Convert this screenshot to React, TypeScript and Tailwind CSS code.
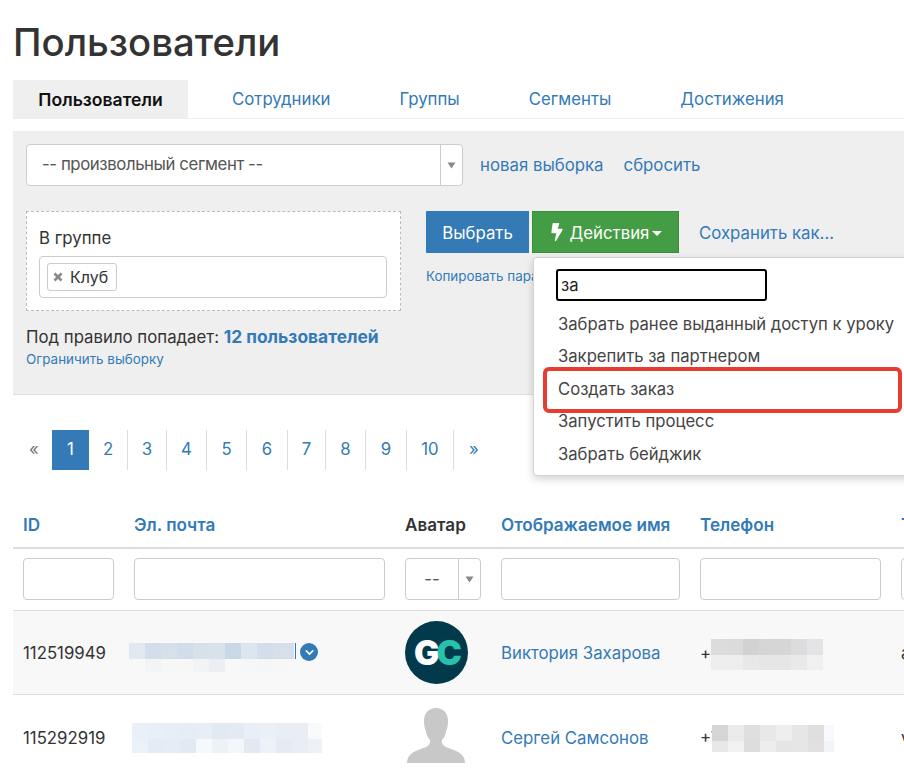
import React from 'react'
import { FaBolt } from 'react-icons/fa'
import { ChevronDown } from 'lucide-react'

const tabs = ['Сотрудники', 'Группы', 'Сегменты', 'Достижения']
const pages = [
  { label: '2', w: 'w-[39px]' },
  { label: '3', w: 'w-[39px]' },
  { label: '4', w: 'w-[40px]' },
  { label: '5', w: 'w-[40px]' },
  { label: '6', w: 'w-[41px]' },
  { label: '7', w: 'w-[38px]' },
  { label: '8', w: 'w-[40px]' },
  { label: '9', w: 'w-[41px]' },
  { label: '10', w: 'w-[47px]' },
]
const menuItems = ['Забрать ранее выданный доступ к уроку', 'Закрепить за партнером', 'Создать заказ', 'Запустить процесс', 'Забрать бейджик']

const email1 = [
  ['bg-[#e2e8ef]', 'bg-[#d3deea]', 'bg-[#d6e0ea]', 'bg-[#d1dde8]', 'bg-[#d6e1ea]', 'bg-[#d8e2eb]', 'bg-[#c9d8e6]', 'bg-[#dde6ee]', 'bg-[#d3deea]', 'bg-[#d6e0ea]', 'bg-[#d3deea]'],
  ['bg-[#f8f8f8]', 'bg-[#f3f4f5]', 'bg-[#f6f7f7]', 'bg-[#f7f7f7]', 'bg-[#f2f3f4]', 'bg-[#ebeff3]', 'bg-[#f8f8f8]', 'bg-[#f6f7f8]', 'bg-[#f5f6f7]', 'bg-[#f7f7f7]', 'bg-[#f8f8f8]'],
]
const email2 = [
  ['bg-[#eaf0f7]', 'bg-[#e9eff7]', 'bg-[#e8eef5]', 'bg-[#e6edf5]', 'bg-[#e8eef5]', 'bg-[#e1e9f2]', 'bg-[#e3eaf3]', 'bg-[#e9eff6]', 'bg-[#eceff4]', 'bg-[#e9eef5]', 'bg-[#e9eef5]', 'bg-[#f8fafc]'],
  ['bg-[#ebf1f8]', 'bg-[#e4ebf4]', 'bg-[#e5ecf5]', 'bg-[#e1e9f3]', 'bg-[#f6f9fb]', 'bg-[#edf2f7]', 'bg-[#f4f7fa]', 'bg-[#e2e9f3]', 'bg-[#edf2f8]', 'bg-[#e5ebf3]', 'bg-[#e9eef5]', 'bg-[#edf2f7]'],
]
const phone1 = [
  ['bg-[#dcdcdc]', 'bg-[#dbdbdb]', 'bg-[#d2d2d2]', 'bg-[#d5d5d5]', 'bg-[#d6d6d6]', 'bg-[#dcdcdc]', 'bg-[#e3e4e5]'],
  ['bg-[#eeeeee]', 'bg-[#eeeeee]', 'bg-[#e8e8e8]', 'bg-[#e6e6e6]', 'bg-[#e6e6e6]', 'bg-[#e9e9e9]', 'bg-[#f0f0f0]'],
]
const phone2 = [
  ['bg-[#d5d5d5]', 'bg-[#ebebeb]', 'bg-[#dedede]', 'bg-[#e8e8e8]', 'bg-[#eeeeee]', 'bg-[#e6e6e6]', 'bg-[#dfdfdf]', 'bg-[#f8f9fc]'],
  ['bg-[#e8e8e8]', 'bg-[#f2f2f2]', 'bg-[#dddddd]', 'bg-[#ededed]', 'bg-[#e5e5e5]', 'bg-[#e6e6e6]', 'bg-[#e2e1e0]', 'bg-[#f3f4f9]'],
]

const Mosaic = ({ rows, heights, className }: { rows: string[][]; heights: string[]; className: string }) => (
  <div className={`flex flex-col shrink-0 overflow-hidden ${className}`}>
    {rows.map((row, i) => (
      <div key={i} className={`flex ${heights[i]}`}>
        {row.map((c, j) => (
          <div key={j} className={`w-[16px] shrink-0 h-full ${c}`} />
        ))}
      </div>
    ))}
  </div>
)

const SelectArrow = () => (
  <svg width="9" height="7" viewBox="0 0 9 7" className="text-[#888]">
    <path d="M0.5 0.5h8L4.5 6.5z" fill="currentColor" />
  </svg>
)

export default function App() {
  return (
    <div className="h-[774px] overflow-hidden bg-white pl-[13px] font-['Inter','Noto_Sans',sans-serif] text-[16.8px] text-[#333] relative">
      <h1 className="h-[80px] pt-[20px] text-[38.3px] leading-[45px] font-medium text-[#333]">Пользователи</h1>

      <div className="flex h-[39px] border-b border-[#eeeeee] w-[900px]">
        <div className="h-[38px] w-[175px] pt-[2px] bg-[#efefef] flex items-center justify-center font-semibold text-[17.6px] text-[#111]">Пользователи</div>
        <div className="flex gap-[19px] ml-[19px]">
          {tabs.map(t => (
            <a key={t} className="px-[25px] h-[38px] pt-[2px] flex items-center text-[#337ab7]">{t}</a>
          ))}
        </div>
      </div>

      <div className="mt-[12px] h-[264px] bg-[#efefef] border-b border-[#dddddd] pt-[13px] pl-[13px]">
        <div className="flex items-center">
          <div className="flex h-[42px] w-[437px] bg-white border border-[#cccccc] rounded-[4px]">
            <div className="flex-1 flex items-center pl-[15px] tracking-[-0.42px] text-[#555]">-- произвольный сегмент --</div>
            <div className="w-[22px] border-l border-[#cccccc] flex items-center justify-center"><SelectArrow /></div>
          </div>
          <a className="ml-[17px] pt-[2px] text-[#337ab7]">новая выборка</a>
          <a className="ml-[20px] pt-[2px] text-[#337ab7]">сбросить</a>
        </div>

        <div className="flex mt-[25px]">
          <div className="w-[375px]">
            <div className="h-[100px] bg-white border border-dashed border-[#bbbbbb] pt-[14px] px-[12px]">
              <div className="leading-[24px] h-[30px]">В группе</div>
              <div className="h-[42px] w-[348px] border border-[#cccccc] rounded-[4px] pt-[6px] pl-[7px]">
                <div className="inline-flex items-center h-[28px] w-[70px] border border-[#cccccc] rounded-[3px] pl-[5px] text-[16px] text-[#333]">
                  <svg width="10" height="10" viewBox="0 0 10 10" className="mr-[7px]"><path d="M1.5 1.5l7 7M8.5 1.5l-7 7" stroke="#888" strokeWidth="2.6" /></svg>
                  Клуб
                </div>
              </div>
            </div>
            <div className="mt-[14px] leading-[24px] whitespace-nowrap">Под правило попадает: <span className="font-bold text-[17.4px] text-[#337ab7]">12 пользователей</span></div>
            <a className="block text-[13.4px] leading-[20px] text-[#337ab7]">Ограничить выборку</a>
          </div>

          <div className="ml-[25px]">
            <div className="flex items-center">
              <button className="h-[42px] w-[103px] pt-[3px] bg-[#337ab7] text-white">Выбрать</button>
              <div className="relative ml-[3px]">
                <button className="h-[42px] w-[147px] pt-[3px] bg-[#449d44] border border-[#3d8b3d] text-white flex items-center justify-center">
                  <FaBolt className="w-[16px] h-[18px] mr-[5px] -mt-[3px]" />Действия
                  <span className="ml-[3px] w-0 h-0 border-x-[5px] border-x-transparent border-t-[5px] border-t-white" />
                </button>
                <div className="absolute z-10 top-[46px] left-[1px] w-[400px] h-[219px] bg-white border border-[#d5d5d5] rounded-[4px] shadow-[0_3px_8px_rgba(0,0,0,0.18)] pt-[11px] pl-[22px] text-[16.65px] text-[#444]">
                  <div className="w-[211px] h-[32px] border-2 border-black rounded-[3px] flex items-center pl-[3px] pt-[1px] text-[#222]">за</div>
                  <ul className="mt-[7px]">
                    {menuItems.map(m => (
                      <li key={m} className="h-[32.5px] flex items-center pl-[2px] whitespace-nowrap">{m}</li>
                    ))}
                  </ul>
                  <div className="absolute left-[9px] top-[109px] w-[359px] h-[46px] border-[4px] border-[#e53d30] rounded-[6px]" />
                </div>
              </div>
              <a className="ml-[20px] pt-[4px] text-[#337ab7]">Сохранить как...</a>
            </div>
            <a className="block mt-[13px] text-[13.4px] leading-[20px] text-[#337ab7]">Копировать параметры</a>
          </div>
        </div>
      </div>

      <div className="mt-[35px] flex h-[40px] items-stretch text-[#337ab7]">
        <div className="w-[39px] flex items-center justify-center pl-[3px] text-[#777]">«</div>
        <div className="w-[37px] bg-[#337ab7] text-white flex items-center justify-center">1</div>
        {pages.map(p => (
          <a key={p.label} className={`flex items-center justify-center border-r border-[#dddddd] ${p.w}`}>{p.label}</a>
        ))}
        <a className="flex items-center pl-[15px]">»</a>
      </div>

      <table className="mt-[31px] table-fixed border-collapse w-[1000px]">
        <colgroup>
          <col className="w-[111px]" />
          <col className="w-[271px]" />
          <col className="w-[96px]" />
          <col className="w-[199px]" />
          <col className="w-[201px]" />
          <col />
        </colgroup>
        <thead>
          <tr className="h-[47px] border-b-[2px] border-[#dddddd] text-left text-[17.1px] text-[#337ab7]">
            <th className="px-[10px] pt-[2px] font-semibold">ID</th>
            <th className="px-[10px] pt-[2px] font-semibold">Эл. почта</th>
            <th className="px-[10px] pt-[2px] font-semibold text-[#333]">Аватар</th>
            <th className="px-[10px] pt-[2px] font-semibold whitespace-nowrap">Отображаемое имя</th>
            <th className="px-[10px] pt-[2px] font-semibold">Телефон</th>
            <th className="px-[10px] pt-[2px] font-semibold">Тип</th>
          </tr>
        </thead>
        <tbody>
          <tr className="h-[62px]">
            <td className="px-[10px]"><div className="h-[42px] border border-[#cccccc] rounded-[4px]" /></td>
            <td className="px-[10px]"><div className="h-[42px] border border-[#cccccc] rounded-[4px]" /></td>
            <td className="px-[10px]">
              <div className="h-[42px] w-[76px] flex border border-[#cccccc] rounded-[4px]">
                <div className="flex-1 flex items-center justify-center text-[#555]">--</div>
                <div className="w-[22px] border-l border-[#cccccc] flex items-center justify-center"><SelectArrow /></div>
              </div>
            </td>
            <td className="px-[10px]"><div className="h-[42px] border border-[#cccccc] rounded-[4px]" /></td>
            <td className="px-[10px]"><div className="h-[42px] border border-[#cccccc] rounded-[4px]" /></td>
            <td className="px-[10px]"><div className="h-[42px] border border-[#cccccc] rounded-[4px]" /></td>
          </tr>
          <tr className="h-[84px] bg-[#f8f8f8] border-y border-[#dddddd]">
            <td className="px-[10px] pt-[4px]">112519949</td>
            <td className="px-[10px]">
              <div className="flex items-start -ml-[5px] mt-[11px]">
                <Mosaic rows={email1} heights={['h-[16px]', 'h-[13px]']} className="w-[165px]" />
                <div className="ml-[1px] w-[1px] h-[16px] bg-[#337ab7]" />
                <div className="ml-[4px] w-[18px] h-[18px] rounded-full bg-[#337ab7] flex items-center justify-center">
                  <ChevronDown className="w-[13px] h-[13px] text-white" strokeWidth={3} />
                </div>
              </div>
            </td>
            <td className="px-[10px]">
              <div className="w-[63px] h-[63px] rounded-full bg-[#023a4c] flex items-center justify-center text-[34px] font-black tracking-[-3px] font-['Inter',sans-serif]">
                <span className="text-white">G</span><span className="text-[#27c2ad]">C</span>
              </div>
            </td>
            <td className="px-[10px] pt-[4px] text-[#337ab7] whitespace-nowrap">Виктория Захарова</td>
            <td className="px-[10px] pt-[4px]">
              <div className="flex items-center">+<Mosaic rows={phone1} heights={['h-[16px]', 'h-[15px]']} className="mt-[1px]" /></div>
            </td>
            <td className="px-[10px] pt-[4px]">a</td>
          </tr>
          <tr className="h-[84px]">
            <td className="px-[10px] pt-[4px]">115292919</td>
            <td className="px-[10px]">
              <div className="-ml-[2px] mt-[4px]">
                <Mosaic rows={email2} heights={['h-[16px]', 'h-[14px]']} className="w-[190px]" />
              </div>
            </td>
            <td className="px-[10px]">
              <svg width="58" height="56" viewBox="0 0 58 56" className="ml-[2px]">
                <path d="M29 0C36 0 41 5 41 13C41 17 40.500 20 39.500 22C39 23 39 25 38 27C37.500 29 36 31 35 32C34.500 35 35.500 37 39 39C44 41 51 43 54 46C56.500 48 58 51 58 55H0C0 51 1.500 48 4 46C7 43 14 41 19 39C22.500 37 23.500 35 23 32C22 31 20.500 29 20 27C19 25 19 23 18.500 22C17.500 20 17 17 17 13C17 5 22 0 29 0z" fill="#c8c8c8" />
              </svg>
            </td>
            <td className="px-[10px] pt-[4px] text-[#337ab7] whitespace-nowrap">Сергей Самсонов</td>
            <td className="px-[10px] pt-[4px]">
              <div className="flex items-center">+7<Mosaic rows={phone2} heights={['h-[16px]', 'h-[11px]']} className="-ml-[8px] mt-[1px] w-[122px]" /></div>
            </td>
            <td className="px-[10px] pt-[4px]">v</td>
          </tr>
        </tbody>
      </table>
    </div>
  )
}
